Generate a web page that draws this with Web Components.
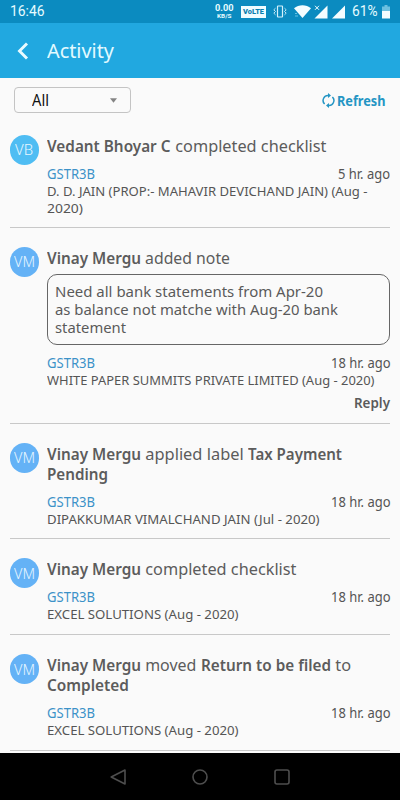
<!DOCTYPE html>
<html lang="en">
<head>
<meta charset="utf-8">
<title>Activity</title>
<style>
html,body{margin:0;height:100%;overflow:hidden}
body{background:#fafafa;color:#5a5a5a;font-family:"Noto Sans","Open Sans",sans-serif}
</style>
</head>
<body>
<activity-app></activity-app>
<script>
function define(name, html, setup){
  const t = document.createElement('template');
  t.innerHTML = html;
  customElements.define(name, class extends HTMLElement{
    connectedCallback(){
      if(this.shadowRoot) return;
      this.attachShadow({mode:'open'}).appendChild(t.content.cloneNode(true));
      if(setup) setup(this, this.shadowRoot);
    }
  });
}

/* A run of text condensed or widened to the width in its "w" attribute. */
define('fit-text', `<style>
:host{display:inline-block;white-space:pre;vertical-align:baseline}
span{display:inline-block;transform-origin:0 50%}
</style><span><slot></slot></span>`, (el, root) => {
  const s = root.querySelector('span'), w = +el.getAttribute('w');
  const natural = s.getBoundingClientRect().width;
  el.style.width = w + 'px';
  if(natural) s.style.transform = 'scaleX(' + w / natural + ')';
});

define('status-bar', `<style>
:host{display:flex;align-items:center;box-sizing:border-box;height:23px;padding:0 10px 0 9.5px;background:#0b8bc0;color:#e6fbff;font-family:Roboto,sans-serif;font-size:15px;line-height:23px}
.sp{flex:1}
.rate{display:flex;flex-direction:column;align-items:center;width:19px;font-weight:700;margin-right:7px}
.rate .v{font-size:9.5px;line-height:8px}
.rate .k{font-size:6px;line-height:7px}
.volte{width:25px;height:12px;background:#effcff;color:#0b7fb0;font-weight:900;font-size:8px;line-height:12px;text-align:center;margin-right:7px}
svg{display:block;fill:#f4fdff}
</style>
<fit-text w="34.5">16:46</fit-text><span class="sp"></span>
<span class="rate"><span class="v"><fit-text w="18.5">0.00</fit-text></span><span class="k"><fit-text w="14.5">KB/S</fit-text></span></span>
<span class="volte"><fit-text w="21">VoLTE</fit-text></span>
<svg width="14" height="13" viewBox="0 0 14 13" style="margin-right:7px"><g fill="none" stroke="#d4f1fb"><rect x="4.5" y="1" width="5" height="11" rx=".5" stroke-width="1.2"/><path d="M2.500 3.200l-1.700 1.600 1.700 1.700-1.700 1.700 1.700 1.600M11.500 3.200l1.700 1.600-1.700 1.700 1.700 1.700-1.700 1.600" stroke-width=".9"/></g></svg>
<svg width="17" height="13" viewBox="0 0 17 13" style="margin-right:3px"><path d="M0 3.200C4.800-.7 12.200-.7 17 3.200L8.500 13z"/><path d="M1 8.500h2M1 11h3" stroke="#7fd0ee" stroke-width=".8"/></svg>
<svg width="14" height="14" viewBox="0 0 14 14" style="margin-right:4px"><path d="M13.500.5V13.500H.5z"/><path d="M1 .8l4 4M5 .8l-4 4" stroke="#f4fdff"/></svg>
<svg width="13" height="14" viewBox="0 0 13 14" style="margin-right:7px"><path d="M13 .5V13.500H0z"/></svg>
<fit-text w="25.500">61%</fit-text>
<svg width="8" height="14" viewBox="0 0 8 14" style="margin-left:4.500px"><path d="M2.500 0h3v1.500H8V6H0V1.500h2.500z" fill="#6cc0e0"/><path d="M0 6h8v7.500H0z"/></svg>`);

define('app-header', `<style>
:host{display:flex;align-items:center;height:55px;background:#21a8e0;color:#e2faff;font-size:19px;line-height:28px}
svg{margin:0 18px 0 16.500px}
</style><svg width="12" height="18" viewBox="0 0 12 18"><path d="M10 1.500L2.500 9l7.500 7.500" fill="none" stroke="#e9fbff" stroke-width="2.900"/></svg><slot></slot>`);

define('filter-bar', `<style>
:host{display:flex;justify-content:space-between;box-sizing:border-box;height:38px;padding:9px 15px 0 14px}
.select{display:flex;align-items:center;justify-content:space-between;box-sizing:border-box;width:117px;height:26px;padding:0 13px 0 17px;border:1px solid #c4c4c4;border-radius:4px;color:#111;font-size:15.500px;line-height:24px}
.refresh{display:flex;align-items:center;height:27px;color:#2495c4;font-weight:700;font-size:13.500px}
.refresh svg{margin-right:2px}
</style>
<span class="select"><fit-text w="17">All</fit-text><svg width="7" height="5" viewBox="0 0 7 5"><path d="M0 .3h7L3.500 4.700z" fill="#848484"/></svg></span>
<span class="refresh"><svg width="13" height="15" viewBox="0 0 13 15"><g fill="none" stroke="#2495c4" stroke-width="1.500"><path d="M2.600 11A5 5 0 0 1 6.800 2.500"/><path d="M10.400 4A5 5 0 0 1 6.200 12.500"/></g><path d="M6 0l3 2.500L6 5zM7 10l-3 2.500L7 15z" fill="#2495c4"/></svg><fit-text w="48.500">Refresh</fit-text></span>`);

define('user-avatar', `<style>
:host{display:flex;align-items:center;justify-content:center;width:29.500px;height:29.500px;border-radius:50%;background:var(--tone,#64b2f6);color:#e6f6ff;font-size:14.500px;font-weight:300;line-height:29px}
</style><slot></slot>`);

define('note-box', `<style>
:host{display:block;box-sizing:border-box;height:71px;margin:6px 0 0;padding:7px;border:1px solid #666;border-radius:10px;font-size:15px;line-height:18px}
</style><slot></slot>`);

define('activity-item', `<style>
:host{display:flex;box-sizing:border-box;margin:0 10px 0 9.500px;padding-top:19px;border-bottom:1px solid #c8c8c8}
.main{flex:1;margin-left:8px}
.title{margin-top:1px;font-size:16px;line-height:20px;color:#5c5c5c}
.title ::slotted(*){display:block}
.meta{display:flex;justify-content:space-between;margin-top:10px;font-size:13.500px;line-height:17px;color:#555}
.form{color:#3c92c8}
.co{font-size:13.300px;line-height:17px;color:#555}
</style>
<slot name="avatar"></slot>
<div class="main"><div class="title"><slot name="title"></slot></div><slot name="note"></slot>
<div class="meta"><span class="form"><fit-text w="48">GSTR3B</fit-text></span><slot name="time"></slot></div>
<div class="co"><slot name="company"></slot></div><slot name="action"></slot></div>`);

define('nav-bar', `<style>
:host{display:flex;align-items:center;justify-content:space-between;box-sizing:border-box;height:47px;padding:0 110.500px 0 110px;background:#000}
svg{display:block;fill:none;stroke:#4e4e4e;stroke-width:1.600;stroke-linejoin:round}
</style>
<svg width="16" height="16" viewBox="0 0 16 16"><path d="M15 1v14L1.200 8z"/></svg>
<svg width="16" height="16" viewBox="0 0 16 16"><circle cx="8" cy="8" r="7"/></svg>
<svg width="16" height="16" viewBox="0 0 16 16"><rect x="1" y="1" width="14" height="14" rx="2"/></svg>`);

define('activity-app', `<style>
:host{display:flex;flex-direction:column;width:400px;height:800px;overflow:hidden}
main{flex:1}
b{font-weight:600}
.reply{display:flex;justify-content:flex-end;margin-top:6px;font-size:13.500px;line-height:17px;font-weight:600}
</style>
<status-bar></status-bar>
<app-header><fit-text w="67">Activity</fit-text></app-header>
<filter-bar></filter-bar>
<main>
<activity-item style="height:112px">
<user-avatar slot="avatar" style="--tone:#4fbdf3"><fit-text w="18">VB</fit-text></user-avatar>
<div slot="title"><b><fit-text w="123.500">Vedant Bhoyar C</fit-text></b><fit-text w="155.500"> completed checklist</fit-text></div>
<fit-text slot="time" w="52">5 hr. ago</fit-text>
<div slot="company"><fit-text w="320.500">D. D. JAIN (PROP:- MAHAVIR DEVICHAND JAIN) (Aug -</fit-text></div>
<div slot="company"><fit-text w="36">2020)</fit-text></div>
</activity-item>
<activity-item style="height:196px">
<user-avatar slot="avatar"><fit-text w="21">VM</fit-text></user-avatar>
<div slot="title"><b><fit-text w="94">Vinay Mergu</fit-text></b><fit-text w="89"> added note</fit-text></div>
<note-box slot="note"><div><fit-text w="268">Need all bank statements from Apr-20</fit-text></div><div><fit-text w="283">as balance not matche with Aug-20 bank</fit-text></div><div><fit-text w="71">statement</fit-text></div></note-box>
<fit-text slot="time" w="59.500">18 hr. ago</fit-text>
<div slot="company"><fit-text w="327.500">WHITE PAPER SUMMITS PRIVATE LIMITED (Aug - 2020)</fit-text></div>
<div slot="action" class="reply"><fit-text w="36">Reply</fit-text></div>
</activity-item>
<activity-item style="height:115.400px">
<user-avatar slot="avatar"><fit-text w="21">VM</fit-text></user-avatar>
<div slot="title"><b><fit-text w="94">Vinay Mergu</fit-text></b><fit-text w="107"> applied label </fit-text><b><fit-text w="94">Tax Payment</fit-text></b></div>
<div slot="title"><b><fit-text w="61">Pending</fit-text></b></div>
<fit-text slot="time" w="59.500">18 hr. ago</fit-text>
<div slot="company"><fit-text w="272.500">DIPAKKUMAR VIMALCHAND JAIN (Jul - 2020)</fit-text></div>
</activity-item>
<activity-item style="height:96px">
<user-avatar slot="avatar"><fit-text w="21">VM</fit-text></user-avatar>
<div slot="title"><b><fit-text w="94">Vinay Mergu</fit-text></b><fit-text w="155.500"> completed checklist</fit-text></div>
<fit-text slot="time" w="59.500">18 hr. ago</fit-text>
<div slot="company"><fit-text w="191.500">EXCEL SOLUTIONS (Aug - 2020)</fit-text></div>
</activity-item>
<activity-item style="height:115.600px">
<user-avatar slot="avatar"><fit-text w="21">VM</fit-text></user-avatar>
<div slot="title"><b><fit-text w="94">Vinay Mergu</fit-text></b><fit-text w="59.500"> moved </fit-text><b><fit-text w="130">Return to be filed</fit-text></b><fit-text w="20"> to</fit-text></div>
<div slot="title"><b><fit-text w="82">Completed</fit-text></b></div>
<fit-text slot="time" w="59.500">18 hr. ago</fit-text>
<div slot="company"><fit-text w="191.500">EXCEL SOLUTIONS (Aug - 2020)</fit-text></div>
</activity-item>
</main>
<nav-bar></nav-bar>`);
</script>
</body>
</html>
